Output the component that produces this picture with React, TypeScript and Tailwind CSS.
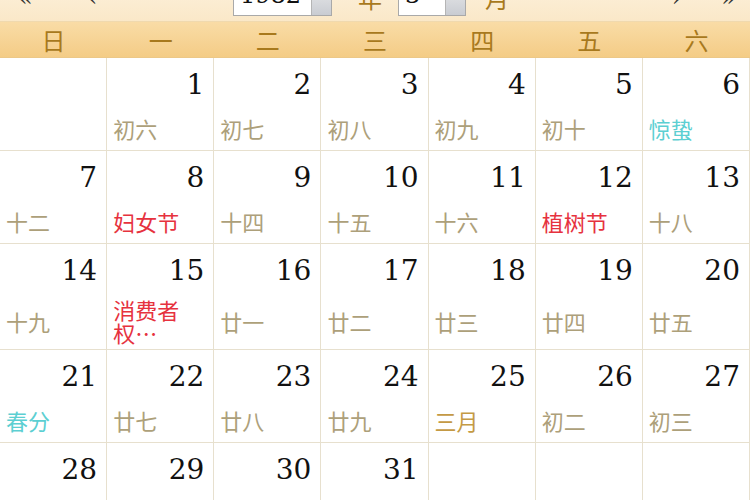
import React from 'react';

type Day = { d: number; lunar: string; kind?: 'term' | 'fest' | 'month' };

const days: Day[] = [
  { d: 1, lunar: '初六' },
  { d: 2, lunar: '初七' },
  { d: 3, lunar: '初八' },
  { d: 4, lunar: '初九' },
  { d: 5, lunar: '初十' },
  { d: 6, lunar: '惊蛰', kind: 'term' },
  { d: 7, lunar: '十二' },
  { d: 8, lunar: '妇女节', kind: 'fest' },
  { d: 9, lunar: '十四' },
  { d: 10, lunar: '十五' },
  { d: 11, lunar: '十六' },
  { d: 12, lunar: '植树节', kind: 'fest' },
  { d: 13, lunar: '十八' },
  { d: 14, lunar: '十九' },
  { d: 15, lunar: '消费者\n权…', kind: 'fest' },
  { d: 16, lunar: '廿一' },
  { d: 17, lunar: '廿二' },
  { d: 18, lunar: '廿三' },
  { d: 19, lunar: '廿四' },
  { d: 20, lunar: '廿五' },
  { d: 21, lunar: '春分', kind: 'term' },
  { d: 22, lunar: '廿七' },
  { d: 23, lunar: '廿八' },
  { d: 24, lunar: '廿九' },
  { d: 25, lunar: '三月', kind: 'month' },
  { d: 26, lunar: '初二' },
  { d: 27, lunar: '初三' },
  { d: 28, lunar: '初四' },
  { d: 29, lunar: '初五' },
  { d: 30, lunar: '初六' },
  { d: 31, lunar: '初七' },
];

const weekdays = ['日', '一', '二', '三', '四', '五', '六'];

const colorFor = (kind?: Day['kind']) => {
  if (kind === 'term') return 'text-[#5ccfd2]';
  if (kind === 'fest') return 'text-[#e6323e]';
  if (kind === 'month') return 'text-[#c49a45]';
  return 'text-[#ada07a]';
};

function Select({ value, width }: { value: string; width: string }) {
  return (
    <div className={`flex h-[36px] ${width} border border-[#a9a9a9] bg-white`}>
      <div className="flex-1 pl-[6px] pt-[2px] font-['DejaVu_Serif'] text-[24px] leading-[24px] text-[#111]">{value}</div>
      <div className="w-[20px] border-l border-[#b5b5b5] bg-gradient-to-b from-[#eeeeee] to-[#c9ccd2]" />
    </div>
  );
}

function Cell({ day }: { day?: Day }) {
  return (
    <div className="flex min-h-[93px] flex-col border-b border-r border-[#e7e0ce] pb-[5px] pl-[6px] pr-[9px] pt-[10px]">
      <div className="h-[34px] text-right font-['DejaVu_Serif'] text-[28px] leading-[34px] text-[#111]">
        {day?.d}
      </div>
      <div className="mt-[10px] flex min-h-[32px] flex-1 items-center">
        {day && (
          <div className={`whitespace-pre-line text-[22px] leading-[23px] ${colorFor(day.kind)}`}>
            {day.lunar}
          </div>
        )}
      </div>
    </div>
  );
}

export default function App() {
  const cells: (Day | undefined)[] = [undefined, ...days, undefined, undefined, undefined];

  return (
    <div className="h-[500px] w-[750px] overflow-hidden bg-white font-['Noto_Sans_CJK_SC',sans-serif]">
      {/* toolbar, top part scrolled out of view */}
      <div className="-mt-[28px] flex h-[50px] items-center border-b border-[#f0d9ae] bg-gradient-to-b from-[#fdf3e1] to-[#fae8c8] pt-[2px] text-[24px] text-[#333]">
        <div className="w-[233px] pl-[18px] font-['DejaVu_Serif'] leading-none">
          <span>«</span>
          <span className="ml-[55px]">‹</span>
        </div>
        <Select value="1982" width="w-[99px]" />
        <span className="ml-[26px] w-[40px] text-[#a8791d]">年</span>
        <Select value="3" width="w-[68px]" />
        <span className="ml-[19px] text-[#a8791d]">月</span>
        <div className="ml-auto pr-[14px] font-['DejaVu_Serif'] leading-none">
          <span>›</span>
          <span className="ml-[40px]">»</span>
        </div>
      </div>

      <div className="grid h-[36px] grid-cols-7 items-center border-b border-[#ecc888] bg-gradient-to-b from-[#f9dca6] to-[#f4cc86] text-[24px] text-[#a8791d]">
        {weekdays.map((w) => (
          <div key={w} className="text-center leading-none">
            {w}
          </div>
        ))}
      </div>

      <div className="grid grid-cols-7">
        {cells.map((c, i) => (
          <Cell key={i} day={c} />
        ))}
      </div>
    </div>
  );
}
